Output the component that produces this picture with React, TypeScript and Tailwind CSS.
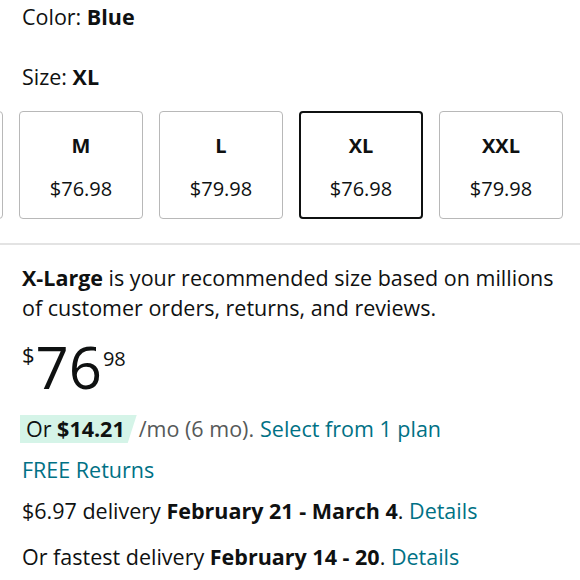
import React from 'react'

const sizes = [
  { label: '', price: '' },
  { label: 'M', price: '$76.98' },
  { label: 'L', price: '$79.98' },
  { label: 'XL', price: '$76.98', selected: true },
  { label: 'XXL', price: '$79.98' },
]

export default function App() {
  return (
    <div className="h-[580px] w-[580px] overflow-hidden bg-white text-[21.5px] text-[#0f1111] [font-family:'Open_Sans','Liberation_Sans',sans-serif]">
      <div className="px-[22px] pt-[3px]">
        <p className="leading-[28px]">
          Color: <span className="font-bold">Blue</span>
        </p>
        <p className="mt-[32px] leading-[28px]">
          Size: <span className="font-bold">XL</span>
        </p>
      </div>

      {/* size picker, scrolled so the first tile is cut off */}
      <div className="mt-[20px] flex gap-4 ml-[-121px] text-[20px]">
        {sizes.map((s, i) => (
          <div
            key={i}
            className={`flex h-[108px] w-[124px] shrink-0 flex-col items-center rounded-[4px] ${
              s.selected ? 'border-2 border-[#0f1111]' : 'border border-[#b8b8b8]'
            }`}
          >
            <span className={`font-bold leading-[24px] ${s.selected ? 'mt-[21px]' : 'mt-[22px]'}`}>{s.label}</span>
            <span className="mt-[19px] leading-[24px]">{s.price}</span>
          </div>
        ))}
      </div>

      <div className="mt-[24px] h-[2px] w-full bg-[#e3e3e3]" />

      <div className="px-[22px] pt-[18px]">
        <p className="leading-[30px]">
          <span className="font-bold">X-Large</span> is your recommended size based on millions of customer orders,
          returns, and reviews.
        </p>

        <div className="mt-[16px] flex items-start">
          <span className="mt-[4px] text-[22px] leading-[22px]">$</span>
          <span className="ml-[1px] text-[58px] leading-[56px]">76</span>
          <span className="ml-[1px] mt-[10px] text-[20px] leading-[20px]">98</span>
        </div>

        <p className="mt-[20px] flex items-center leading-[28px]">
          <span className="ml-[-2px] bg-[#d5f4e8] pl-[6px] pr-[12px] [clip-path:polygon(0_0,100%_0,calc(100%-9px)_100%,0_100%)]">
            Or <span className="font-bold">$14.21</span>
          </span>
          <span className="ml-[2px] text-[#565959]">/mo (6 mo).</span>
          <span className="ml-[6px] text-[#007185]">Select from 1 plan</span>
        </p>

        <p className="mt-[13px] leading-[28px] text-[#007185]">FREE Returns</p>

        <p className="mt-[13px] leading-[28px]">
          $6.97 delivery <span className="font-bold">February 21 - March 4</span>.{' '}
          <span className="text-[#007185]">Details</span>
        </p>

        <p className="mt-[18px] leading-[28px]">
          Or fastest delivery <span className="font-bold">February 14 - 20</span>.{' '}
          <span className="text-[#007185]">Details</span>
        </p>
      </div>
    </div>
  )
}
